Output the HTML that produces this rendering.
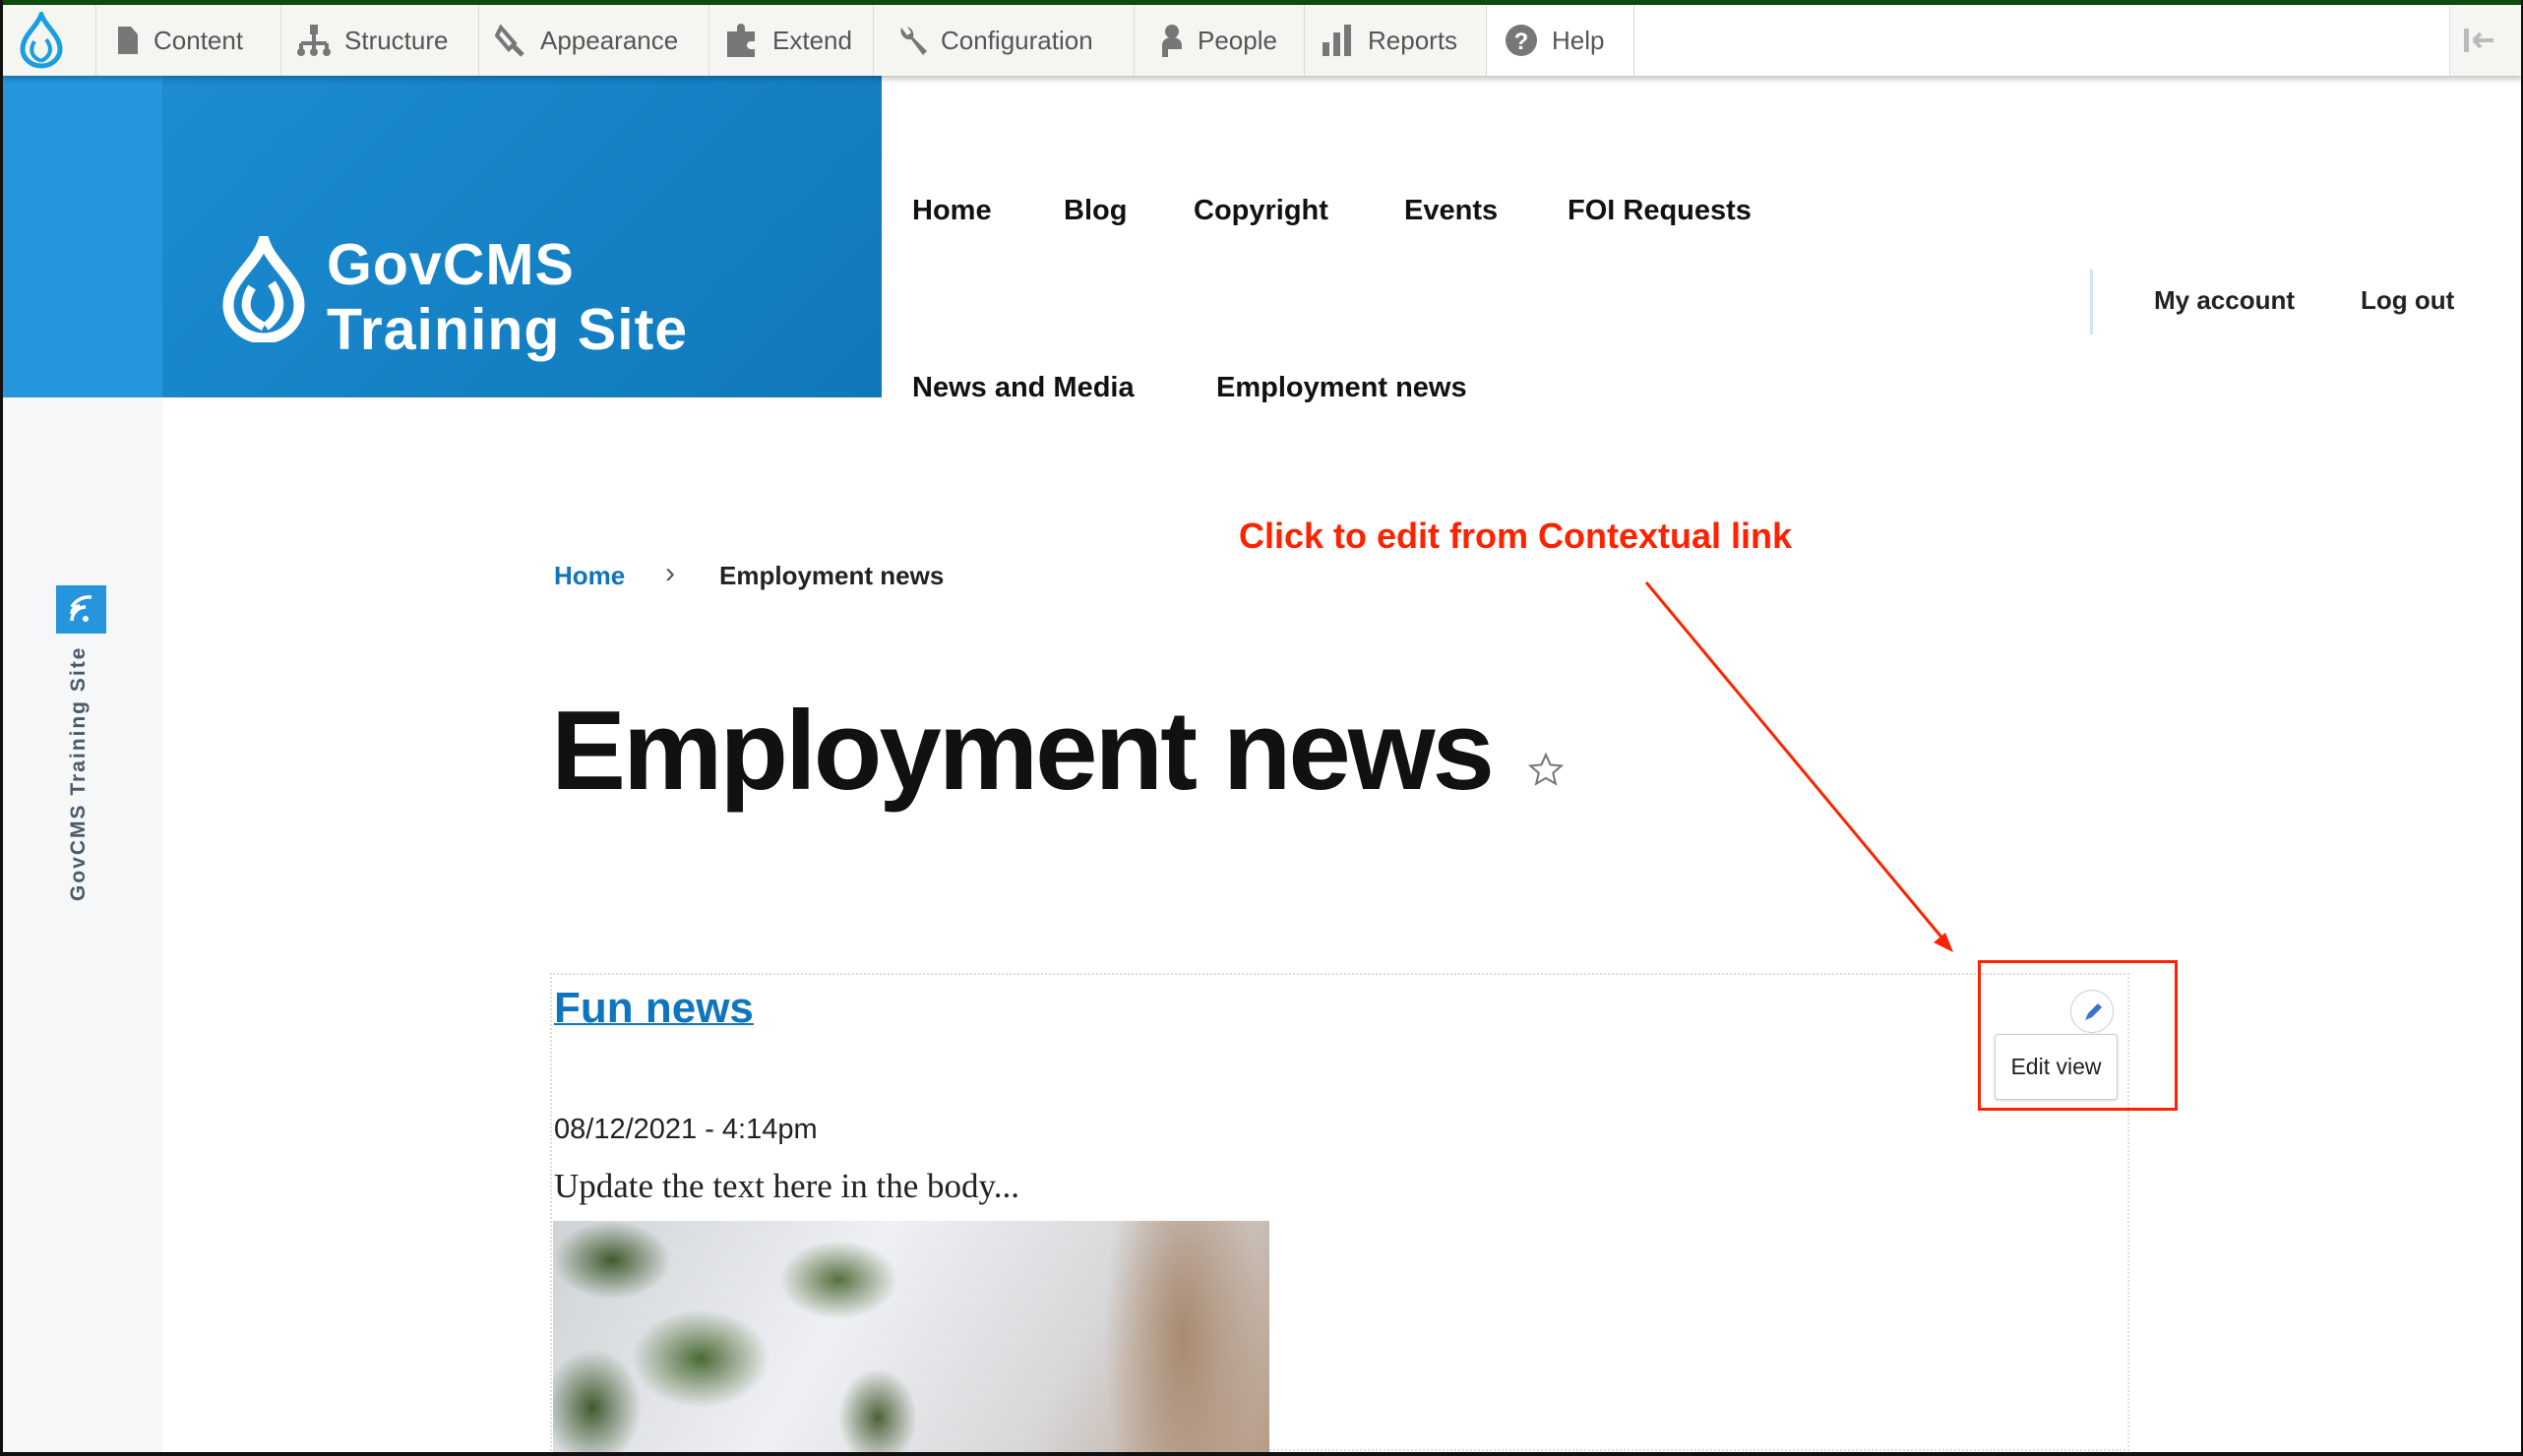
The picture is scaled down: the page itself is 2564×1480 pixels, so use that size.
<!DOCTYPE html>
<html><head><meta charset="utf-8"><style>
*{margin:0;padding:0;box-sizing:border-box}
body{width:2564px;height:1480px;position:relative;overflow:hidden;background:#fff;font-family:"Liberation Sans",sans-serif;color:#111}
.abs{position:absolute}
#frame{position:absolute;left:0;top:0;width:2564px;height:1480px;border-left:3px solid #111;border-bottom:4px solid #111;border-right:2px solid #111;pointer-events:none;z-index:50}
#topline{left:0;top:0;width:2564px;height:5px;background:#0d4d0d}
#tb{left:0;top:5px;width:2564px;height:72px;background:#fff;box-shadow:0 3px 6px rgba(0,0,0,.25);z-index:5}
.ti{position:absolute;top:0;height:72px;background:#f5f5f2;border-right:1px solid #dcdcd6;display:flex;align-items:center;font-size:26px;color:#555}
.ti svg{margin-right:14px}
#side{left:3px;top:77px;width:162px;height:1400px;background:#f5f7f9}
#hdr{left:3px;top:77px;width:893px;height:327px;background:linear-gradient(135deg,#1f8fd5 0%,#0f78bb 100%)}
#hdrstrip{left:3px;top:77px;width:162px;height:327px;background:#2596dd}
.nav{position:absolute;font-weight:bold;font-size:29px;color:#111}
</style></head><body>
<div class="abs" id="topline"></div>
<div class="abs" id="tb">
 <div class="ti" style="left:0;width:98px;justify-content:center"><svg width="46" height="58" viewBox="0 0 46 58"><path d="M23 3 C18 16 4 24 4 38 a19 17 0 0 0 38 0 C42 24 28 16 23 3Z" fill="none" stroke="#1a9ee0" stroke-width="5"/><path d="M16 30 q-8 14 7 20 M28 28 q10 14-5 22" fill="none" stroke="#1a9ee0" stroke-width="4"/></svg></div>
 <div class="ti" style="left:98px;width:188px;padding-left:20px"><svg width="24" height="32"><path d="M2 2h13l7 8v20H2z" fill="#777"/></svg>Content</div>
 <div class="ti" style="left:286px;width:201px;padding-left:16px"><svg width="34" height="34"><rect x="13" y="1" width="8" height="10" fill="#777"/><path d="M4 20h26M17 11v9M4 20v6M17 20v6M30 20v6" stroke="#777" stroke-width="4" fill="none"/><circle cx="4" cy="29" r="4" fill="#777"/><circle cx="17" cy="29" r="4" fill="#777"/><circle cx="30" cy="29" r="4" fill="#777"/></svg>Structure</div>
 <div class="ti" style="left:487px;width:234px;padding-left:16px"><svg width="32" height="34"><path d="M6 4 l14 16 -6 6 L2 12z" fill="none" stroke="#777" stroke-width="4"/><path d="M18 22 l10 10" stroke="#777" stroke-width="5"/></svg>Appearance</div>
 <div class="ti" style="left:721px;width:167px;padding-left:16px"><svg width="34" height="34"><path d="M2 8h10v-4a4 4 0 0 1 8 0v4h10v10h-4a4 4 0 0 0 0 8h4v8H2z" fill="#777"/></svg>Extend</div>
 <div class="ti" style="left:888px;width:265px;padding-left:24px"><svg width="30" height="34"><path d="M4 4 a9 9 0 0 0 10 12 l12 16 4-4 -14-14 a9 9 0 0 0-6-11 l4 6-4 3z" fill="#777"/></svg>Configuration</div>
 <div class="ti" style="left:1153px;width:173px;padding-left:20px"><svg width="30" height="34"><circle cx="18" cy="8" r="7" fill="#777"/><path d="M8 34v-12c0-5 4-8 10-8s10 3 10 8v4H14v8z" fill="#777"/></svg>People</div>
 <div class="ti" style="left:1326px;width:185px;padding-left:16px"><svg width="34" height="32"><rect x="2" y="18" width="7" height="14" fill="#777"/><rect x="13" y="8" width="7" height="24" fill="#777"/><rect x="24" y="0" width="7" height="32" fill="#777"/></svg>Reports</div>
 <div class="ti" style="left:1511px;width:150px;padding-left:18px;background:#fff"><svg width="34" height="34"><circle cx="17" cy="17" r="16" fill="#777"/><text x="17" y="26" text-anchor="middle" font-size="24" font-weight="bold" fill="#fff" font-family="Liberation Sans">?</text></svg>Help</div>
 <div class="ti" style="left:2489px;width:75px;background:#f5f5f2;border-left:1px solid #ddd;justify-content:center"><svg width="36" height="24"><rect x="2" y="0" width="5" height="24" fill="#bbb"/><path d="M12 12h20M12 12l7-7M12 12l7 7" stroke="#bbb" stroke-width="4" fill="none"/></svg></div>
</div>
<div class="abs" id="side"></div>
<div class="abs" id="hdr"></div>
<div class="abs" id="hdrstrip"></div>
<svg class="abs" style="left:226px;top:240px" width="84" height="108" viewBox="0 0 84 108"><path d="M42 4 C34 30 6 44 6 70 a36 34 0 0 0 72 0 C78 44 50 30 42 4Z" fill="none" stroke="#fff" stroke-width="11"/><path d="M30 52 q-16 26 12 40 M50 48 q18 26-6 44" fill="none" stroke="#fff" stroke-width="9"/></svg>
<div class="abs" style="left:332px;top:236px;color:#fff;font-weight:bold;font-size:59px;line-height:66px;letter-spacing:1px">GovCMS<br>Training Site</div>
<div class="nav" style="left:927px;top:198px">Home</div>
<div class="nav" style="left:1081px;top:198px">Blog</div>
<div class="nav" style="left:1213px;top:198px">Copyright</div>
<div class="nav" style="left:1427px;top:198px">Events</div>
<div class="nav" style="left:1593px;top:198px">FOI Requests</div>
<div class="nav" style="left:927px;top:378px">News and Media</div>
<div class="nav" style="left:1236px;top:378px">Employment news</div>
<div class="abs" style="left:2124px;top:274px;width:3px;height:66px;background:#d6e4ef"></div>
<div class="abs" style="left:2189px;top:290px;font-size:26px;font-weight:bold;color:#222">My account</div>
<div class="abs" style="left:2399px;top:290px;font-size:26px;font-weight:bold;color:#222">Log out</div>
<div class="abs" style="left:57px;top:595px;width:51px;height:49px;background:#2596dd"><svg width="51" height="49"><path d="M16 36a14 14 0 0 1 14-14 M16 29a8 8 0 0 1 8-8 M16 22a20 20 0 0 1 20-10" stroke="#fff" stroke-width="3.5" fill="none"/><circle cx="30" cy="34" r="3" fill="#fff"/></svg></div>
<div class="abs" style="left:68px;top:916px;transform:rotate(-90deg);transform-origin:0 0;font-size:21px;font-weight:bold;letter-spacing:2px;color:#4a5a6a;white-space:nowrap">GovCMS Training Site</div>
<div class="abs" style="left:563px;top:570px;font-size:26px;font-weight:bold;color:#0f75bc">Home</div>
<div class="abs" style="left:676px;top:566px;font-size:30px;color:#555">›</div>
<div class="abs" style="left:731px;top:570px;font-size:26px;font-weight:bold;color:#222">Employment news</div>
<div class="abs" style="left:1259px;top:524px;font-size:36px;font-weight:bold;color:#ff2200;white-space:nowrap">Click to edit from Contextual link</div>
<svg class="abs" style="left:0;top:0" width="2564" height="1480"><line x1="1673" y1="592" x2="1975" y2="955" stroke="#ff2200" stroke-width="3"/><path d="M1985 968 l-20-10 12-10z" fill="#ff2200"/></svg>
<div class="abs" style="left:560px;top:698px;font-size:114px;font-weight:bold;letter-spacing:-3px;color:#111;white-space:nowrap">Employment news</div>
<svg class="abs" style="left:1552px;top:764px" width="38" height="38" viewBox="0 0 24 24"><path d="M12 2l2.9 6.5 7 .6-5.3 4.6 1.6 6.9L12 17l-6.2 3.6 1.6-6.9L2.1 9.1l7-.6z" fill="none" stroke="#777" stroke-width="1.3"/></svg>
<div class="abs" style="left:559px;top:989px;width:1605px;height:486px;border:2px dotted #ddd"></div>
<div class="abs" style="left:563px;top:1000px;font-size:44px;font-weight:bold;color:#0f75bc;text-decoration:underline;text-decoration-thickness:2px">Fun news</div>
<div class="abs" style="left:2010px;top:976px;width:203px;height:153px;border:3px solid #ff2200"></div>
<div class="abs" style="left:2104px;top:1006px;width:44px;height:44px;border-radius:50%;background:#fff;border:1px solid #ccc"><svg width="44" height="44"><path d="M14 30l3-7 10-10 4 4-10 10z" fill="#3a6fd8"/></svg></div>
<div class="abs" style="left:2027px;top:1051px;width:125px;height:67px;background:#fff;border:1px solid #ccc;border-radius:4px;box-shadow:0 1px 3px rgba(0,0,0,.15);font-size:23px;display:flex;align-items:center;justify-content:center;color:#222">Edit view</div>
<div class="abs" style="left:563px;top:1132px;font-size:29px;color:#222">08/12/2021 - 4:14pm</div>
<div class="abs" style="left:563px;top:1186px;font-size:35px;font-family:'Liberation Serif',serif;color:#222">Update the text here in the body...</div>
<div class="abs" style="left:562px;top:1241px;width:728px;height:236px;background:
radial-gradient(ellipse 60px 40px at 60px 40px,#3e5a2e,transparent),
radial-gradient(ellipse 70px 50px at 150px 140px,#4b6b35,transparent),
radial-gradient(ellipse 50px 60px at 40px 190px,#3f5a30,transparent),
radial-gradient(ellipse 60px 40px at 290px 60px,#55703f,transparent),
radial-gradient(ellipse 40px 50px at 330px 200px,#4b6238,transparent),
radial-gradient(ellipse 80px 240px at 640px 120px,#a98a70,transparent),
linear-gradient(120deg,#cfd3d6,#eef0f3 40%,#d8d8da 70%,#b69c86)"></div>
<div id="frame"></div>
</body></html>
